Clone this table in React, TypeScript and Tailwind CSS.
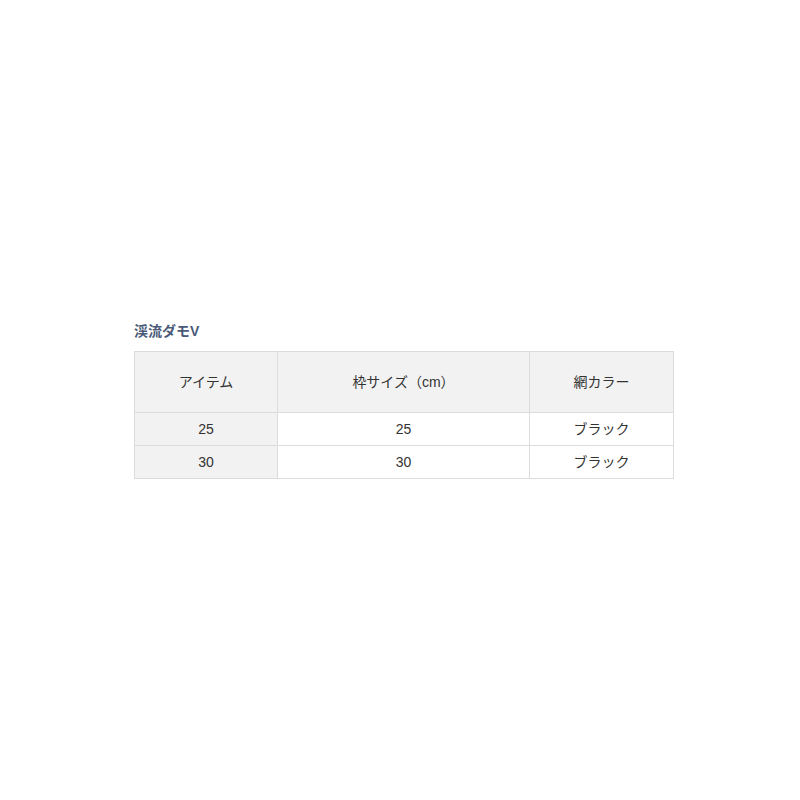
export default function App() {
  const rows = [
    { item: '25', size: '25', color: 'ブラック' },
    { item: '30', size: '30', color: 'ブラック' },
  ];
  return (
    <div
      className="flex h-[800px] w-[800px] flex-col bg-white pl-[134px] pt-[322px] text-[14px] text-[#333]"
      style={{ fontFamily: '"Liberation Sans", "Noto Sans CJK JP", sans-serif' }}
    >
      <h2 className="mb-[11px] h-[18px] text-[14px] font-bold leading-[18px] text-[#4a5a78]">渓流ダモV</h2>
      <table className="w-[540px] border-collapse border border-[#dcdcdc] text-center">
        <thead>
          <tr className="h-[61px] bg-[#f2f2f2]">
            <th className="w-[143px] border border-[#dcdcdc] font-normal">アイテム</th>
            <th className="w-[252px] border border-[#dcdcdc] font-normal">枠サイズ（cm）</th>
            <th className="border border-[#dcdcdc] font-normal">網カラー</th>
          </tr>
        </thead>
        <tbody>
          {rows.map((r) => (
            <tr key={r.item} className="h-[33px]">
              <td className="border border-[#dcdcdc] bg-[#f2f2f2]">{r.item}</td>
              <td className="border border-[#dcdcdc]">{r.size}</td>
              <td className="border border-[#dcdcdc]">{r.color}</td>
            </tr>
          ))}
        </tbody>
      </table>
    </div>
  );
}
